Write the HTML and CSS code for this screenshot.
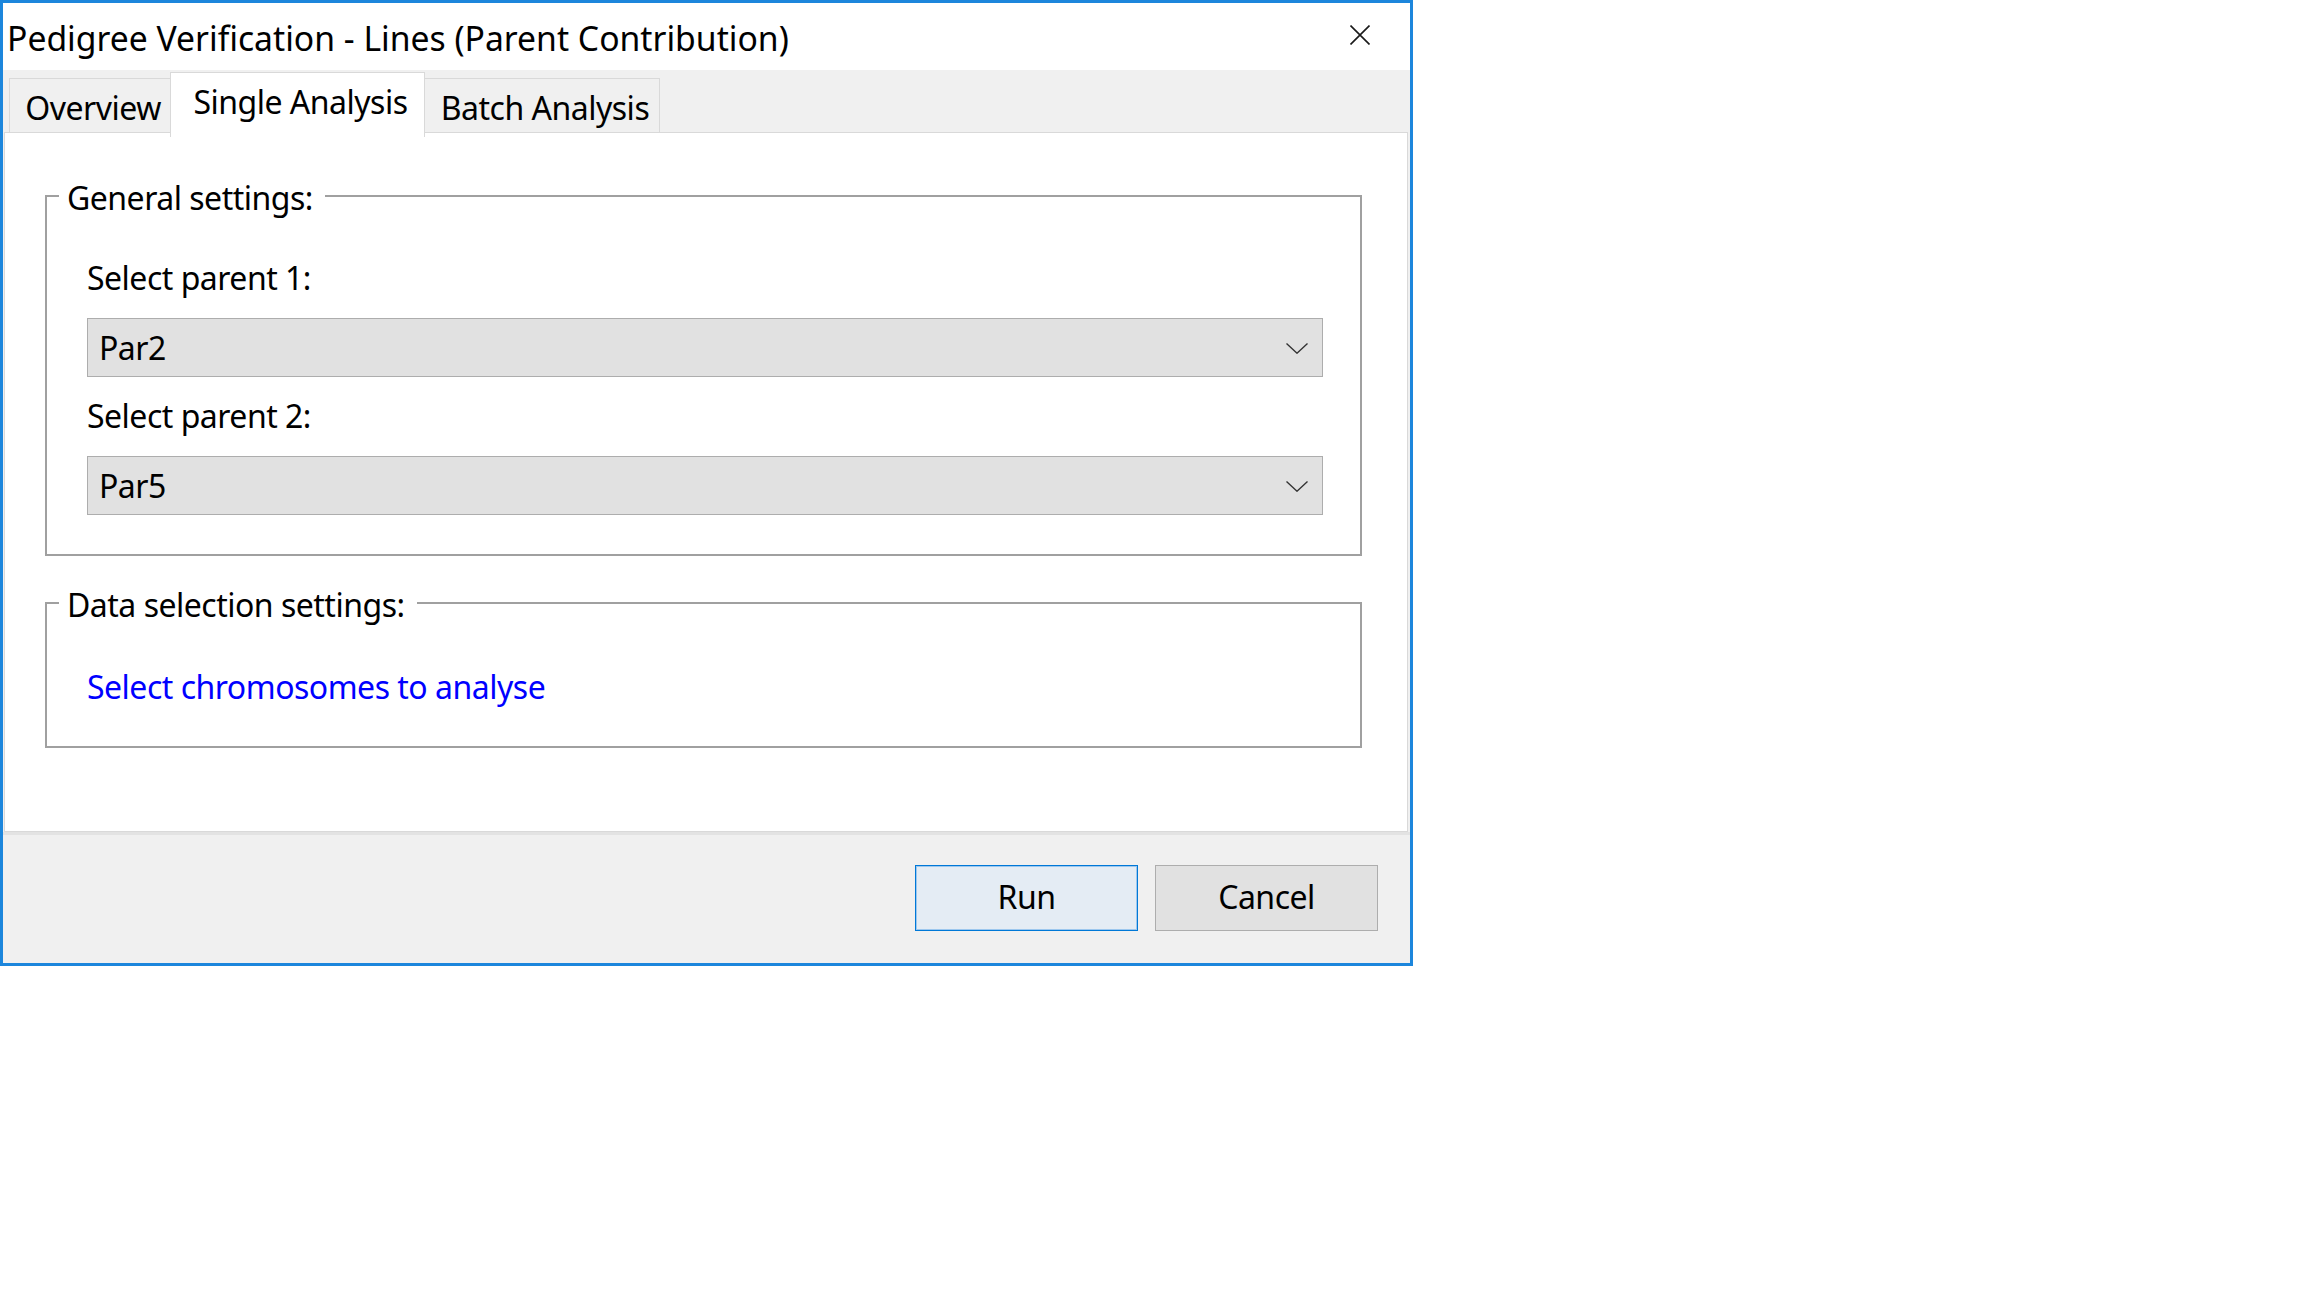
FILE: index.html
```html
<!DOCTYPE html>
<html lang="en">
<head>
    <meta charset="UTF-8">
    <meta name="viewport" content="width=device-width, initial-scale=1.0">
    <title>Pedigree Verification - Lines (Parent Contribution)</title>
    <link rel="stylesheet" href="styles.css">
</head>
<body>
    <div class="dialog">
        <div class="titlebar">
            <span class="title">Pedigree Verification - Lines (Parent Contribution)</span>
            <span class="close">
                <svg width="20" height="20" viewBox="0 0 20 20">
                    <path d="M0.5 0.5 L19.5 19.5 M19.5 0.5 L0.5 19.5" stroke="#1a1a1a" stroke-width="1.6" fill="none"/>
                </svg>
            </span>
        </div>
        <div class="tabs">
            <div class="tab overview">Overview</div>
            <div class="tab single active">Single Analysis</div>
            <div class="tab batch">Batch Analysis</div>
        </div>
        <div class="pane">
            <fieldset class="group general">
                <legend><span>General settings:</span></legend>
                <label class="field-label">Select parent 1:</label>
                <div class="combo first">
                    <span>Par2</span>
                    <svg width="22" height="11" viewBox="0 0 22 11">
                        <path d="M0.5 0.5 L11 10.2 L21.5 0.5" stroke="#333" stroke-width="1.4" fill="none"/>
                    </svg>
                </div>
                <label class="field-label">Select parent 2:</label>
                <div class="combo">
                    <span>Par5</span>
                    <svg width="22" height="11" viewBox="0 0 22 11">
                        <path d="M0.5 0.5 L11 10.2 L21.5 0.5" stroke="#333" stroke-width="1.4" fill="none"/>
                    </svg>
                </div>
            </fieldset>
            <fieldset class="group data">
                <legend><span>Data selection settings:</span></legend>
                <a class="link" href="#">Select chromosomes to analyse</a>
            </fieldset>
        </div>
        <div class="footer">
            <button class="btn default">Run</button>
            <button class="btn">Cancel</button>
        </div>
    </div>
</body>
</html>
```

FILE: styles.css
```css
body {
    margin: 0;
    background: #fff;
    font-family: "Noto Sans", "Open Sans", sans-serif;
    color: #000;
}
.dialog {
    box-sizing: border-box;
    width: 1413px;
    height: 966px;
    border: 3px solid #1c86dc;
    background: #f0f0f0;
    display: flex;
    flex-direction: column;
    letter-spacing: -0.5px;
}
.titlebar {
    height: 67px;
    flex: none;
    background: #fff;
    display: flex;
    align-items: center;
    padding-left: 4px;
}
.title {
    font-size: 33.7px;
    line-height: 40px;
    padding-top: 2px;
    letter-spacing: 0;
}
.close {
    margin-left: auto;
    margin-right: 40px;
    margin-bottom: 4px;
    display: flex;
}
.tabs {
    height: 62px;
    flex: none;
    display: flex;
    align-items: flex-end;
    padding-left: 6px;
}
.tab {
    box-sizing: border-box;
    height: 54px;
    border: 1px solid #d9d9d9;
    border-bottom: none;
    background: #f0f0f0;
    display: flex;
    align-items: center;
    justify-content: center;
    padding: 3px 0 0 6px;
    font-size: 32px;
}
.tab + .tab { margin-left: -1px; }
.overview { width: 162px; }
.single { width: 255px; }
.batch { width: 236px; }
.tab.active {
    height: 65px;
    margin-bottom: -5px;
    padding: 0 0 8px 6px;
    background: #fff;
    position: relative;
    z-index: 1;
}
.pane {
    flex: 1;
    background: #fff;
    border: 1px solid #d9d9d9;
    margin: 0 2px 0 1px;
    padding: 44px 45px 0 40px;
}
.group {
    margin: 0;
    border: 2px solid #a0a0a0;
    padding: 44px 37px 39px 40px;
    min-width: 0;
}
.group legend {
    font-size: 32px;
    line-height: 38px;
    padding: 0 12px 0 8px;
    margin-left: -28px;
}
/* caption sits a bit under the frame line */
.group legend span {
    position: relative;
    top: 2px;
}
.field-label {
    display: block;
    font-size: 32px;
    line-height: 38px;
    margin-bottom: 21px;
}
.combo {
    box-sizing: border-box;
    height: 59px;
    background: #e1e1e1;
    border: 1px solid #adadad;
    display: flex;
    align-items: center;
    justify-content: space-between;
    padding: 0 14px 0 11px;
    font-size: 32px;
}
.combo.first { margin-bottom: 20px; }
.combo svg { margin-top: 2px; }
.group.data {
    margin-top: 28px;
    padding-top: 46px;
    padding-bottom: 40px;
}
.link {
    display: block;
    font-size: 32px;
    line-height: 38px;
    color: #0000ff;
    text-decoration: none;
}
.footer {
    height: 131px;
    flex: none;
    border-top: 3px solid #e3e3e3;
    display: flex;
    justify-content: flex-end;
    align-items: flex-start;
    gap: 17px;
    padding: 30px 32px 0 0;
    box-sizing: border-box;
}
.btn {
    width: 223px;
    height: 66px;
    font-family: inherit;
    font-size: 32px;
    letter-spacing: -0.5px;
    color: #000;
    background: #e1e1e1;
    border: 1px solid #adadad;
    padding: 0 0 4px;
}
.btn.default {
    background: #e4ecf4;
    border-color: #0078d7;
    box-shadow: inset 0 0 0 1px #9cc7ee;
}
```
